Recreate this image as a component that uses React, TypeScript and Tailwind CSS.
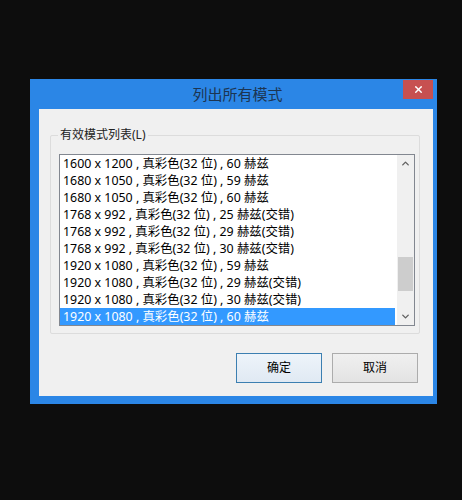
import { ChevronDown, ChevronUp, X } from "lucide-react";

const modes = [
  "1600 x 1200 , 真彩色(32 位) , 60 赫兹",
  "1680 x 1050 , 真彩色(32 位) , 59 赫兹",
  "1680 x 1050 , 真彩色(32 位) , 60 赫兹",
  "1768 x 992 , 真彩色(32 位) , 25 赫兹(交错)",
  "1768 x 992 , 真彩色(32 位) , 29 赫兹(交错)",
  "1768 x 992 , 真彩色(32 位) , 30 赫兹(交错)",
  "1920 x 1080 , 真彩色(32 位) , 59 赫兹",
  "1920 x 1080 , 真彩色(32 位) , 29 赫兹(交错)",
  "1920 x 1080 , 真彩色(32 位) , 30 赫兹(交错)",
  "1920 x 1080 , 真彩色(32 位) , 60 赫兹",
];

const font = "font-['Segoe_UI','Noto_Sans','Noto_Sans_CJK_SC',sans-serif]";

export default function App() {
  return (
    <div className={cn("w-[462px] h-[500px] bg-[#0d0d0d] pt-[79px] pl-[30px]", font)}>
      <div className="relative w-[407px] h-[325px] bg-[#2b86e6] flex flex-col pl-[9px] pr-[4px] pb-[8px]">
        <div className="h-[30px] flex items-center justify-center pl-[3px] text-[15px] text-[#1c3552]">
          列出所有模式
        </div>
        <button className="absolute left-[373px] top-[1px] w-[30px] h-[19px] bg-[#c75050] flex items-center justify-center">
          <X className="w-[11px] h-[11px] text-white" strokeWidth={3} />
        </button>

        <div className="flex-1 bg-[#f0f0f0] flex flex-col pt-[26px] pl-[11px]">
          <div className="relative w-[370px] h-[199px] border border-[#dcdcdc] rounded-[2px] pt-[18px] pl-[8px]">
            <span className="absolute -top-[9px] left-[7px] px-[2px] bg-[#f0f0f0] text-[12px] leading-[16px] text-[#222]">
              有效模式列表(L)
            </span>
            <div className="w-[356px] h-[172px] border border-[#828790] bg-white flex">
              <div className="flex-1 flex flex-col">
                {modes.map((m, i) => (
                  <div
                    key={m}
                    className={
                      i === modes.length - 1
                        ? "h-[17px] pl-[3px] text-[12.4px] leading-[17px] text-white bg-[#3399ff] whitespace-nowrap"
                        : "h-[17px] pl-[3px] text-[12.4px] leading-[17px] text-black whitespace-nowrap"
                    }
                  >
                    {m}
                  </div>
                ))}
              </div>
              <div className="w-[17px] ml-[2px] bg-[#f0f0f0] flex flex-col">
                <div className="h-[17px] flex items-center justify-center">
                  <ChevronUp className="w-[11px] h-[11px] text-[#606060]" strokeWidth={3} />
                </div>
                <div className="flex-1 flex flex-col pt-[85px]">
                  <div className="h-[34px] mx-[1px] bg-[#cdcdcd]" />
                </div>
                <div className="h-[17px] flex items-center justify-center">
                  <ChevronDown className="w-[11px] h-[11px] text-[#606060]" strokeWidth={3} />
                </div>
              </div>
            </div>
          </div>

          <div className="flex gap-[10px] pl-[186px] pt-[19px]">
            <button className="w-[86px] h-[30px] border border-[#3c7fb1] bg-gradient-to-b from-[#eef4fa] to-[#e0e9f3] text-[12px] text-black">
              确定
            </button>
            <button className="w-[86px] h-[30px] border border-[#acacac] bg-gradient-to-b from-[#f0f0f0] to-[#e3e3e3] text-[12px] text-black">
              取消
            </button>
          </div>
        </div>
      </div>
    </div>
  );
}

function cn(...c: string[]) {
  return c.join(" ");
}
